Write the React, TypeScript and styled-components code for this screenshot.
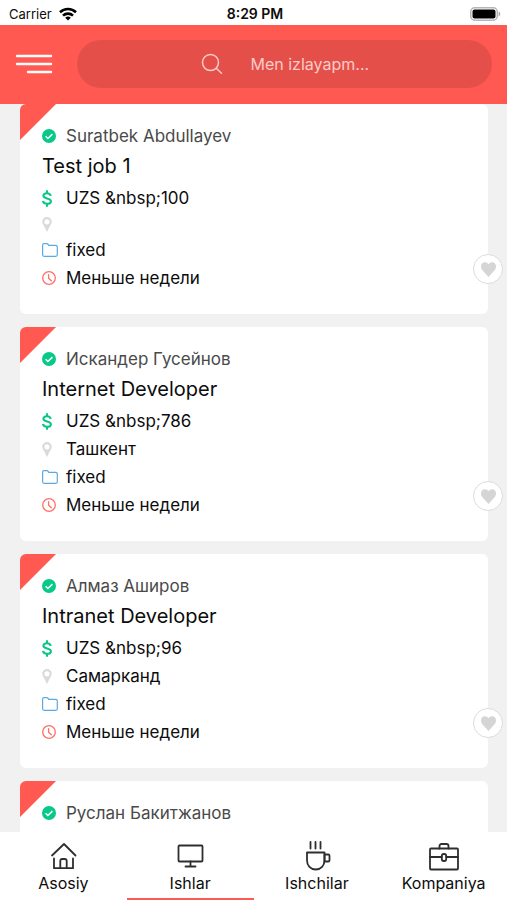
import React from "react";
import styled, { createGlobalStyle } from "styled-components";

const coral = "#ff5951";
const page = "#f1f1f1";

const GlobalStyle = createGlobalStyle`
  *, *::before, *::after { box-sizing: border-box; }
  body {
    margin: 0;
    background: ${page};
    color: #0c0c0c;
    font-family: Inter, "Noto Sans", sans-serif;
    font-size: 16px;
  }
  button, input { font: inherit; color: inherit; }
  svg { display: block; flex: none; }
`;

const Screen = styled.div`
  display: flex;
  flex-direction: column;
  height: 100vh;
  overflow: hidden;
`;

const StatusBar = styled.div`
  display: grid;
  grid-template-columns: 1fr auto 1fr;
  align-items: center;
  flex: none;
  height: 25px;
  padding: 2px 6px 0 9px;
  background: #fff;
  font-size: 13px;
`;

const Carrier = styled.span`
  display: flex;
  align-items: center;
  gap: 7px;
`;

const Time = styled.time`
  font-weight: 600;
  font-size: 14px;
`;

const Battery = styled.span`
  justify-self: end;
`;

const Header = styled.header`
  display: flex;
  align-items: center;
  flex: none;
  gap: 24px;
  height: 79px;
  padding: 0 15px 1px;
  background: ${coral};
`;

const MenuButton = styled.button`
  padding: 0;
  border: 0;
  background: none;
  cursor: pointer;
`;

const SearchField = styled.label`
  display: flex;
  flex: 1;
  align-items: center;
  justify-content: center;
  gap: 28px;
  height: 48px;
  padding-left: 6px;
  border-radius: 24px;
  background: #e45049;
  color: #fbcbc8;
`;

const SearchInput = styled.input`
  width: 124px;
  padding: 0;
  border: 0;
  outline: 0;
  background: transparent;
  &::placeholder {
    color: #fbcbc8;
    opacity: 1;
  }
`;

const JobList = styled.main`
  display: flex;
  flex: 1;
  flex-direction: column;
  gap: 13px;
  min-height: 0;
  padding: 0 19px 0 20px;
  overflow: hidden;
`;

const Card = styled.article`
  position: relative;
  flex: none;
  padding: 18px 22px 22px;
  border-radius: 6px;
  background: linear-gradient(135deg, ${coral} 25px, #fff 26px);
`;

const Row = styled.div<{ $empty?: boolean; $muted?: boolean }>`
  display: flex;
  align-items: center;
  height: ${(p) => (p.$empty ? 24 : 28)}px;
  color: ${(p) => (p.$muted ? "#4a4a4a" : "inherit")};
  font-size: 17px;
`;

const IconSlot = styled.span`
  flex: none;
  width: 24px;
`;

const Title = styled.h2`
  margin: 0 0 2px;
  font-size: 20px;
  font-weight: 400;
  line-height: 32px;
`;

const LikeButton = styled.button`
  position: absolute;
  right: -15px;
  bottom: 30px;
  display: grid;
  place-items: center;
  width: 30px;
  height: 30px;
  padding: 0;
  border: 1px solid #dcdcdc;
  border-radius: 50%;
  background: #fff;
  cursor: pointer;
`;

const TabBar = styled.nav`
  display: grid;
  grid-template-columns: repeat(4, 1fr);
  flex: none;
  height: 68px;
  background: #fff;
`;

const Tab = styled.a<{ $active?: boolean }>`
  display: flex;
  flex-direction: column;
  align-items: center;
  padding-top: 8px;
  border-bottom: 2px solid ${(p) => (p.$active ? coral : "transparent")};
  color: inherit;
  line-height: 23px;
  text-decoration: none;
`;

const WifiIcon = () => (
  <svg width="18" height="14" viewBox="0 0 18 14" fill="none" stroke="#000" strokeWidth="2.6" aria-hidden="true">
    <path d="M1 5.2a11.5 11.5 0 0 1 16 0" />
    <path d="M4 8.6a7.2 7.2 0 0 1 10 0" />
    <path d="M9 13.6 6.2 10.8a4.1 4.1 0 0 1 5.6 0z" fill="#000" stroke="none" />
  </svg>
);

const BatteryIcon = () => (
  <svg width="31" height="14" viewBox="0 0 31 14" aria-label="Battery full" role="img">
    <rect x="0.75" y="0.75" width="26.5" height="12.5" rx="4" fill="#fff" stroke="#b5b5b5" strokeWidth="1.5" />
    <rect x="2.5" y="2.5" width="23" height="9" rx="2" fill="#000" />
    <path d="M28.6 4.6c2.2.8 2.2 4 0 4.8z" fill="#a5a5a5" />
  </svg>
);

const MenuIcon = () => (
  <svg width="38" height="22" viewBox="0 0 38 22" stroke="#fff" strokeWidth="2.4" strokeLinecap="round" aria-hidden="true">
    <path d="M2 3h34M2 11h34M13 19h23" />
  </svg>
);

const SearchIcon = () => (
  <svg width="22" height="22" viewBox="0 0 22 22" fill="none" stroke="currentColor" strokeWidth="1.5" strokeLinecap="round" aria-hidden="true">
    <circle cx="9.5" cy="9.5" r="8" />
    <path d="m15.2 15.2 5.3 5" />
  </svg>
);

const CheckIcon = () => (
  <svg width="14" height="14" viewBox="0 0 14 14" aria-hidden="true">
    <circle cx="7" cy="7" r="7" fill="#08c987" />
    <path d="m3.6 7.2 2.3 2.3 4.5-4.4" fill="none" stroke="#fff" strokeWidth="1.5" />
  </svg>
);

const DollarIcon = () => (
  <svg width="10" height="17" viewBox="0 0 10 17" fill="none" stroke="#0cc688" strokeWidth="2.1" aria-hidden="true">
    <path d="M5 .2v3M5 13.8v3" />
    <path d="M8.7 5.9C8.4 4.1 7 3.2 5 3.2S1.4 4.2 1.4 5.8C1.4 9.3 8.9 7.5 8.9 11.2c0 1.6-1.5 2.6-3.7 2.6S1.2 12.8 1 10.9" />
  </svg>
);

const PinIcon = () => (
  <svg width="10" height="15" viewBox="0 0 10 15" aria-hidden="true">
    <path
      fill="#dadada"
      fillRule="evenodd"
      d="M5 0a4.8 4.8 0 0 1 4.8 4.8c0 2.6-2.5 4.3-3.2 7L5 15l-1.6-3.2C2.700 9.100.2 7.400.2 4.800A4.800 4.800 0 0 1 5 0zm0 2.200a2.600 2.600 0 1 0 0 5.200 2.600 2.600 0 0 0 0-5.200z"
    />
  </svg>
);

const FolderIcon = () => (
  <svg width="16" height="14" viewBox="0 0 16 14" fill="none" stroke="#5aa9e3" strokeWidth="1.2" strokeLinejoin="round" aria-hidden="true">
    <path d="M.6 2c0-.8.5-1.400 1.400-1.400h2.900c.5 0 .9.300 1.200.7l.7 1h6.800c1 0 1.700.6 1.700 1.500v8c0 .9-.6 1.500-1.500 1.500H2.100c-.9 0-1.500-.6-1.500-1.500z" />
  </svg>
);

const ClockIcon = () => (
  <svg width="14" height="14" viewBox="0 0 14 14" fill="none" stroke="#ff6f68" strokeWidth="1.3" strokeLinecap="round" aria-hidden="true">
    <circle cx="7" cy="7" r="6.3" />
    <path d="M6.600 3.600v3.600l2.800 2.600" />
  </svg>
);

const HeartIcon = () => (
  <svg width="15" height="15" viewBox="0 0 15 15" aria-hidden="true">
    <path fill="#d5d5d5" d="M7.500 15 1.200 8C-.5 6-.3 3 1 1.500 2.800-.5 6-.1 7.500 2.200 9-.1 12.200-.5 14 1.500c1.300 1.500 1.500 4.500-.2 6.500z" />
  </svg>
);

const TabIcon = ({ children }: { children: React.ReactNode }) => (
  <svg width="32" height="32" viewBox="0 0 32 32" fill="none" stroke="#2e2e2e" strokeWidth="1.8" strokeLinecap="round" strokeLinejoin="round" aria-hidden="true">
    {children}
  </svg>
);

const tabs = [
  {
    label: "Asosiy",
    icon: (
      <TabIcon>
        <path d="M5 15.500 17 4l11.500 11.500" />
        <path d="M7 18.500v9.700h19v-9.700" />
        <path d="M13.300 28.200V21c0-1.300.7-2 2-2h2.400c1.300 0 2 .7 2 2v7.200" />
      </TabIcon>
    ),
  },
  {
    label: "Ishlar",
    active: true,
    icon: (
      <TabIcon>
        <rect x="4.500" y="5.500" width="24" height="16" rx="1" />
        <path d="M16.500 21.500v5M11.500 26.500h10" />
      </TabIcon>
    ),
  },
  {
    label: "Ishchilar",
    icon: (
      <TabIcon>
        <path d="M9.500 2v6.500M14.500 2v6.500M19.500 2v6.500" />
        <path d="M6 12.500h17.500v7.700c0 5.500-3.500 9.300-8.750 9.300S6 25.700 6 20.200z" />
        <path d="M23.500 14.500h3.700c.8 0 1.300.5 1.300 1.300v4.400c0 .8-.5 1.300-1.300 1.300h-3.700z" />
      </TabIcon>
    ),
  },
  {
    label: "Kompaniya",
    icon: (
      <TabIcon>
        <rect x="2" y="8.500" width="28" height="21" rx="1" />
        <path d="M11.500 8.500V6c0-1.200.8-2 2-2h5c1.200 0 2 .8 2 2v2.500M2 17h11.800M18.200 17H30" />
        <rect x="13.800" y="14" width="4.400" height="7" rx="2" />
      </TabIcon>
    ),
  },
];

type Details = { title: string; pay: string; city: string; kind: string; term: string };
type Job = { owner: string; details?: Details };

const term = "Меньше недели";

const jobs: Job[] = [
  { owner: "Suratbek Abdullayev", details: { title: "Test job 1", pay: "UZS &nbsp;100", city: "", kind: "fixed", term } },
  { owner: "Искандер Гусейнов", details: { title: "Internet Developer", pay: "UZS &nbsp;786", city: "Ташкент", kind: "fixed", term } },
  { owner: "Алмаз Аширов", details: { title: "Intranet Developer", pay: "UZS &nbsp;96", city: "Самарканд", kind: "fixed", term } },
  { owner: "Руслан Бакитжанов" },
];

const JobDetails = ({ details }: { details: Details }) => (
  <>
    <Title>{details.title}</Title>
    <Row>
      <IconSlot><DollarIcon /></IconSlot>
      {details.pay}
    </Row>
    <Row $empty={!details.city}>
      <IconSlot><PinIcon /></IconSlot>
      {details.city}
    </Row>
    <Row>
      <IconSlot><FolderIcon /></IconSlot>
      {details.kind}
    </Row>
    <Row>
      <IconSlot><ClockIcon /></IconSlot>
      {details.term}
    </Row>
    <LikeButton type="button" aria-label="Like">
      <HeartIcon />
    </LikeButton>
  </>
);

const JobCard = ({ job }: { job: Job }) => (
  <Card>
    <Row $muted>
      <IconSlot><CheckIcon /></IconSlot>
      {job.owner}
    </Row>
    {job.details && <JobDetails details={job.details} />}
  </Card>
);

export default function App() {
  return (
    <>
      <GlobalStyle />
      <Screen>
        <StatusBar>
          <Carrier>Carrier <WifiIcon /></Carrier>
          <Time>8:29 PM</Time>
          <Battery><BatteryIcon /></Battery>
        </StatusBar>
        <Header>
          <MenuButton type="button" aria-label="Menu"><MenuIcon /></MenuButton>
          <SearchField>
            <SearchIcon />
            <SearchInput type="text" placeholder="Men izlayapm..." aria-label="Search" />
          </SearchField>
        </Header>
        <JobList>
          {jobs.map((job) => (
            <JobCard key={job.owner} job={job} />
          ))}
        </JobList>
        <TabBar>
          {tabs.map((tab) => (
            <Tab key={tab.label} href="#" $active={tab.active}>
              {tab.icon}
              {tab.label}
            </Tab>
          ))}
        </TabBar>
      </Screen>
    </>
  );
}
